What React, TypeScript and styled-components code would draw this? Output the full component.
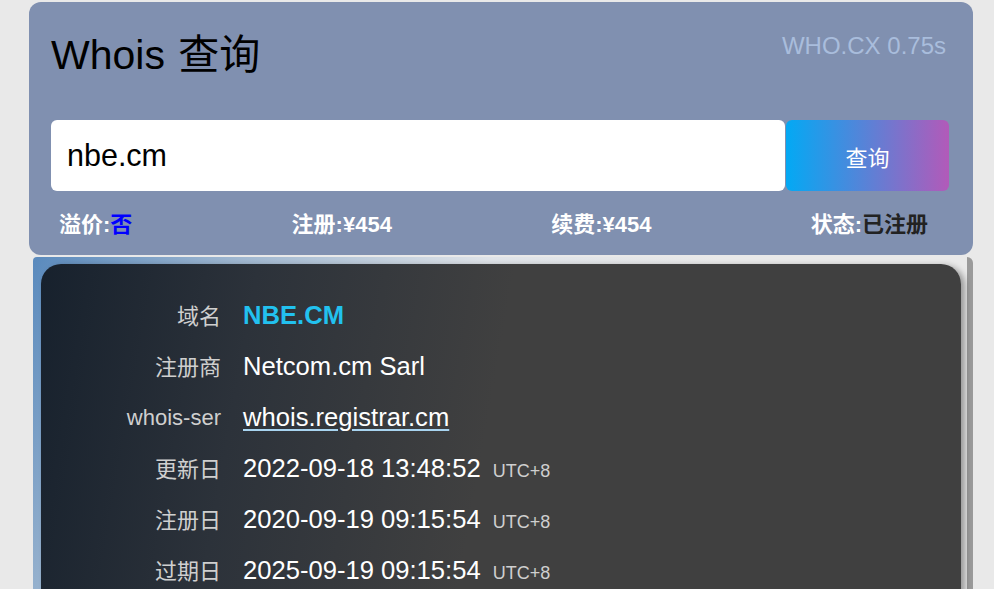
import React from "react";
import styled, { createGlobalStyle } from "styled-components";

const GlobalStyle = createGlobalStyle`
  html, body {
    margin: 0;
    padding: 0;
    background: #e9e9e9;
    overflow: hidden;
  }
  body {
    font-family: "Liberation Sans", Arial, "Noto Sans CJK SC", sans-serif;
  }
  * { box-sizing: border-box; }
`;

const Page = styled.div`
  padding: 2px 21px 0 29px;
`;

const TopCard = styled.section`
  background: #8090b0;
  border-radius: 12px;
  padding: 30px 24px 0 22px;
  height: 253px;
`;

const Header = styled.div`
  display: flex;
  justify-content: space-between;
  align-items: flex-start;
`;

const Title = styled.h1`
  margin: 0;
  font-size: 41px;
  line-height: 46px;
  font-weight: normal;
  color: #000;
  word-spacing: 2px;
`;

const Meta = styled.div`
  font-size: 24px;
  line-height: 28px;
  color: #a9bddc;
  margin-right: 3px;
`;

const SearchRow = styled.div`
  display: flex;
  gap: 1px;
  margin-top: 42px;
  height: 71px;
`;

const Input = styled.input`
  flex: 1;
  border: none;
  outline: none;
  border-radius: 6px;
  background: #fff;
  padding: 0 16px;
  font-family: inherit;
  font-size: 30.5px;
  color: #000;
`;

const SearchButton = styled.button`
  width: 163px;
  border: none;
  border-radius: 6px;
  background: linear-gradient(to right, #03a9f4, #b25ab9);
  color: #fff;
  font-family: inherit;
  font-size: 22px;
  cursor: pointer;
`;

const Stats = styled.div`
  display: flex;
  justify-content: space-between;
  align-items: center;
  padding: 0 21px 0 8px;
  margin-top: 20px;
  line-height: 28px;
  font-size: 22px;
  font-weight: bold;
  color: #fff;
`;

const Accent = styled.span<{ $color: string }>`
  color: ${(p) => p.$color};
`;

const Result = styled.section`
  margin: 2px 0 0 4px;
  padding: 7px 6px 0 8px;
  border-right: 6px solid #9a9a9a;
  border-radius: 4px 6px 0 0;
  background: linear-gradient(118deg, #5a8abd 0%, #9fb7d0 18%, #dfe3e8 40%, #e9e9e9 60%);
`;

const DarkCard = styled.div`
  border-radius: 20px 20px 0 0;
  background: linear-gradient(100deg, #17212d 0%, #2c323a 22%, #404040 48%, #404040 100%);
  box-shadow: 4px 2px 6px rgba(0, 0, 0, 0.35);
  padding: 26px 0 60px 0;
`;

const Row = styled.div`
  display: grid;
  grid-template-columns: 180px 1fr;
  column-gap: 22px;
  align-items: center;
  height: 51px;
`;

const Label = styled.div<{ $cjk?: boolean }>`
  text-align: right;
  font-size: 22px;
  color: #cfcfcf;
  white-space: nowrap;
  padding-bottom: ${(p) => (p.$cjk ? "4px" : "0")};
`;

const Value = styled.div`
  font-size: 25.6px;
  color: #fff;
  white-space: nowrap;
`;

const DomainName = styled.span`
  color: #22c1ef;
  font-weight: bold;
`;

const Link = styled.a`
  color: #fff;
  text-decoration: underline;
  text-decoration-color: #a8d4f0;
  text-underline-offset: 3px;
`;

const Zone = styled.span`
  font-size: 18px;
  color: #cfcfcf;
  margin-left: 12px;
`;

const dates = [
  { label: "更新日", value: "2022-09-18 13:48:52" },
  { label: "注册日", value: "2020-09-19 09:15:54" },
  { label: "过期日", value: "2025-09-19 09:15:54" },
];

export default function App() {
  return (
    <Page>
      <GlobalStyle />
      <TopCard>
        <Header>
          <Title>Whois 查询</Title>
          <Meta>WHO.CX 0.75s</Meta>
        </Header>
        <SearchRow>
          <Input defaultValue="nbe.cm" />
          <SearchButton>查询</SearchButton>
        </SearchRow>
        <Stats>
          <span>
            溢价:<Accent $color="#0000ff">否</Accent>
          </span>
          <span>注册:¥454</span>
          <span>续费:¥454</span>
          <span>
            状态:<Accent $color="#222222">已注册</Accent>
          </span>
        </Stats>
      </TopCard>
      <Result>
        <DarkCard>
          <Row>
            <Label $cjk>域名</Label>
            <Value>
              <DomainName>NBE.CM</DomainName>
            </Value>
          </Row>
          <Row>
            <Label $cjk>注册商</Label>
            <Value>Netcom.cm Sarl</Value>
          </Row>
          <Row>
            <Label>whois-ser</Label>
            <Value>
              <Link href="#">whois.registrar.cm</Link>
            </Value>
          </Row>
          {dates.map((d) => (
            <Row key={d.label}>
              <Label $cjk>{d.label}</Label>
              <Value>
                {d.value}
                <Zone>UTC+8</Zone>
              </Value>
            </Row>
          ))}
        </DarkCard>
      </Result>
    </Page>
  );
}
